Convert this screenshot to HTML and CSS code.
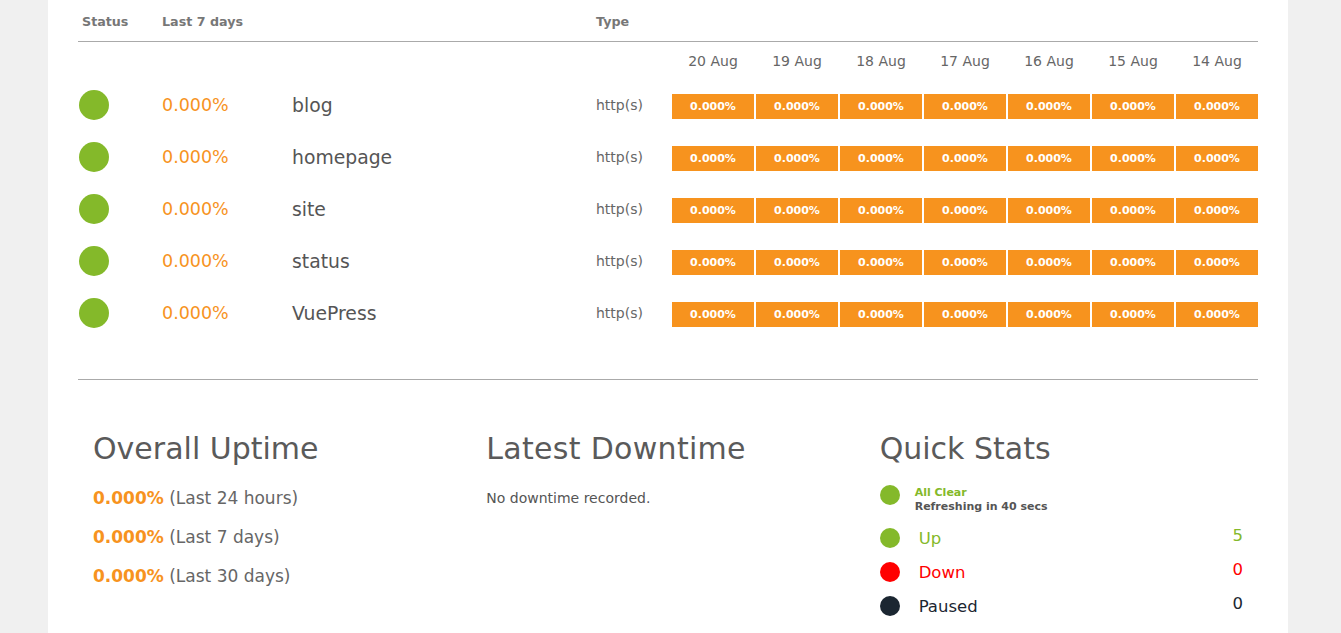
FILE: index.html
```html
<!DOCTYPE html>
<html>
<head>
<meta charset="utf-8">
<link rel="stylesheet" href="styles.css">
</head>
<body>
<div class="page">
  <div class="thead">
    <div class="th c-status">Status</div>
    <div class="th c-pct">Last 7 days</div>
    <div class="th c-name"></div>
    <div class="th c-type">Type</div>
    <div></div>
  </div>
  <div class="trow dates">
    <div></div><div></div><div></div><div></div>
    <div class="days">
      <span>20 Aug</span><span>19 Aug</span><span>18 Aug</span><span>17 Aug</span><span>16 Aug</span><span>15 Aug</span><span>14 Aug</span>
    </div>
  </div>
  <div class="trow">
    <div class="c-status"><span class="dot big"></span></div>
    <div class="c-pct pct">0.000%</div>
    <div class="c-name name">blog</div>
    <div class="c-type type">http(s)</div>
    <div class="days bars"><span>0.000%</span><span>0.000%</span><span>0.000%</span><span>0.000%</span><span>0.000%</span><span>0.000%</span><span>0.000%</span></div>
  </div>
  <div class="trow">
    <div class="c-status"><span class="dot big"></span></div>
    <div class="c-pct pct">0.000%</div>
    <div class="c-name name">homepage</div>
    <div class="c-type type">http(s)</div>
    <div class="days bars"><span>0.000%</span><span>0.000%</span><span>0.000%</span><span>0.000%</span><span>0.000%</span><span>0.000%</span><span>0.000%</span></div>
  </div>
  <div class="trow">
    <div class="c-status"><span class="dot big"></span></div>
    <div class="c-pct pct">0.000%</div>
    <div class="c-name name">site</div>
    <div class="c-type type">http(s)</div>
    <div class="days bars"><span>0.000%</span><span>0.000%</span><span>0.000%</span><span>0.000%</span><span>0.000%</span><span>0.000%</span><span>0.000%</span></div>
  </div>
  <div class="trow">
    <div class="c-status"><span class="dot big"></span></div>
    <div class="c-pct pct">0.000%</div>
    <div class="c-name name">status</div>
    <div class="c-type type">http(s)</div>
    <div class="days bars"><span>0.000%</span><span>0.000%</span><span>0.000%</span><span>0.000%</span><span>0.000%</span><span>0.000%</span><span>0.000%</span></div>
  </div>
  <div class="trow">
    <div class="c-status"><span class="dot big"></span></div>
    <div class="c-pct pct">0.000%</div>
    <div class="c-name name">VuePress</div>
    <div class="c-type type">http(s)</div>
    <div class="days bars"><span>0.000%</span><span>0.000%</span><span>0.000%</span><span>0.000%</span><span>0.000%</span><span>0.000%</span><span>0.000%</span></div>
  </div>

  <div class="bottom">
    <div class="col">
      <h2>Overall Uptime</h2>
      <p class="up-line"><b>0.000%</b> (Last 24 hours)</p>
      <p class="up-line"><b>0.000%</b> (Last 7 days)</p>
      <p class="up-line"><b>0.000%</b> (Last 30 days)</p>
    </div>
    <div class="col">
      <h2>Latest Downtime</h2>
      <p class="nodown">No downtime recorded.</p>
    </div>
    <div class="col">
      <h2>Quick Stats</h2>
      <div class="clear">
        <span class="dot sm green"></span>
        <div class="clear-text">
          <div class="allclear">All Clear</div>
          <div class="refresh">Refreshing in 40 secs</div>
        </div>
      </div>
      <div class="stat s-up"><span class="dot sm green"></span><span class="label">Up</span><span class="num">5</span></div>
      <div class="stat s-down"><span class="dot sm red"></span><span class="label">Down</span><span class="num">0</span></div>
      <div class="stat s-paused"><span class="dot sm dark"></span><span class="label">Paused</span><span class="num">0</span></div>
    </div>
  </div>
</div>
</body>
</html>
```

FILE: styles.css
```css
html, body {
  margin: 0;
  padding: 0;
  background: #f0f0f0;
  font-family: "DejaVu Sans", "Open Sans", sans-serif;
  color: #555;
}
.page {
  width: 1180px;
  margin-left: 48px;
  padding: 0 30px 40px;
  background: #fff;
  min-height: 633px;
}
.thead, .trow {
  display: grid;
  grid-template-columns: 80px 130px 304px 80px 586px;
  align-items: center;
}
.thead {
  height: 42px;
  border-bottom: 1px solid #aaa;
  box-sizing: border-box;
  padding-top: 2px;
}
.th {
  font-size: 12.7px;
  font-weight: bold;
  color: #777;
}
.trow { height: 52px; }
.trow.dates { height: 37px; }
.c-status { padding-left: 1px; display: flex; }
.c-pct, .c-name, .c-type { padding-left: 4px; }
.th.c-status { padding-left: 4px; }
.dot {
  display: inline-block;
  border-radius: 50%;
  background: #84b92a;
  flex: none;
}
.dot.big { width: 30px; height: 30px; }
.dot.sm { width: 20px; height: 20px; }
.dot.green { background: #84b92a; }
.dot.red { background: #ff0000; }
.dot.dark { background: #1b2631; }
.pct { color: #f7931e; font-size: 17.5px; }
.name { color: #555; font-size: 18.8px; }
.type { color: #666; font-size: 14px; }
.days {
  display: grid;
  grid-template-columns: repeat(7, 82px);
  column-gap: 2px;
}
.days span {
  text-align: center;
  font-size: 14px;
  color: #666;
}
.bars span {
  background: #f7931e;
  color: #fff;
  font-weight: bold;
  font-size: 11px;
  height: 25px;
  line-height: 25px;
  margin-top: 3px;
}
.bottom {
  margin-top: 40px;
  border-top: 1px solid #aaa;
  display: grid;
  grid-template-columns: repeat(3, 1fr);
  padding-top: 52px;
}
.col { padding: 0 15px; }
h2 {
  margin: 0;
  font-weight: normal;
  font-size: 30px;
  line-height: 34px;
  color: #5a5a5a;
}
.col:nth-child(2) h2 { letter-spacing: 0.3px; }
.up-line {
  margin: 0;
  font-size: 17px;
  line-height: 39px;
  color: #666;
}
.up-line:first-of-type { margin-top: 13px; }
.up-line b { color: #f7931e; }
.nodown {
  margin: 24px 0 0;
  font-size: 14px;
  color: #555;
}
.clear {
  display: flex;
  align-items: flex-start;
  gap: 15px;
  margin-top: 19px;
}
.clear-text { font-size: 11px; font-weight: bold; line-height: 14px; padding-top: 1px; }
.allclear { color: #84b92a; }
.refresh { color: #555; }
.stat {
  display: flex;
  align-items: center;
  height: 34px;
  font-size: 16.5px;
}
.s-up { margin-top: 7px; }
.stat .label { margin-left: 19px; flex: 1; }
.stat .num { position: relative; top: -3px; }
.s-up { color: #84b92a; }
.s-down { color: #ff0000; }
.s-paused { color: #1b2631; }
```
